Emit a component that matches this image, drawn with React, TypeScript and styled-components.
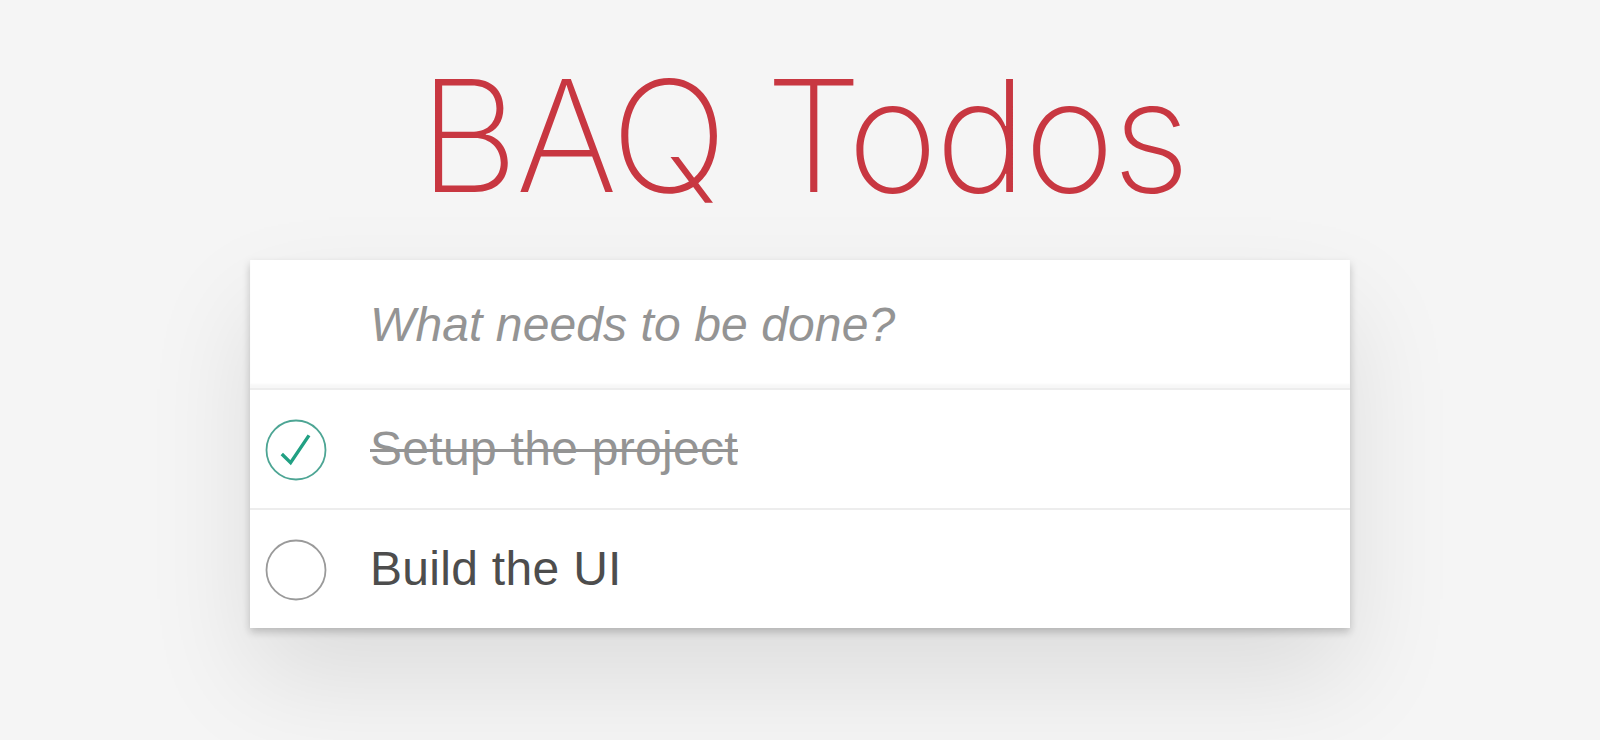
import React from "react";
import styled, { createGlobalStyle } from "styled-components";

const GlobalStyle = createGlobalStyle`
  html, body {
    margin: 0;
    padding: 0;
    background: #f5f5f5;
  }
  body {
    font-family: "Liberation Sans", Arial, sans-serif;
    -webkit-font-smoothing: antialiased;
  }
`;

const Page = styled.div`
  display: flex;
  flex-direction: column;
  align-items: center;
  min-height: 740px;
  padding-top: 58px;
  box-sizing: border-box;
`;

const Title = styled.h1`
  margin: 0;
  font-family: Inter, "Liberation Sans", sans-serif;
  font-weight: 200;
  font-size: 155px;
  line-height: 1;
  color: #c83741;
  letter-spacing: -2.9px;
  padding-left: 6px;
`;

const Card = styled.section`
  width: 1100px;
  margin-top: 47px;
  background: #ffffff;
  box-shadow: 0 4px 8px 0 rgba(0, 0, 0, 0.2), 0 50px 100px 0 rgba(0, 0, 0, 0.1);
`;

const InputRow = styled.div`
  height: 130px;
  display: flex;
  align-items: center;
  padding-left: 120px;
  box-shadow: inset 0 -4px 2px rgba(0, 0, 0, 0.03);
  border-bottom: 2px solid #ededed;
  box-sizing: border-box;
`;

const NewTodo = styled.input`
  flex: 1;
  border: none;
  outline: none;
  background: transparent;
  font-family: "Liberation Sans", Arial, sans-serif;
  font-size: 48px;
  letter-spacing: 0.1px;
  color: #4d4d4d;
  padding: 0 32px 0 0;
  &::placeholder {
    font-style: italic;
    color: #949494;
  }
`;

const List = styled.ul`
  list-style: none;
  margin: 0;
  padding: 0;
`;

const Item = styled.li<{ $last?: boolean }>`
  height: ${(p) => (p.$last ? "118px" : "120px")};
  display: flex;
  align-items: center;
  border-bottom: ${(p) => (p.$last ? "none" : "2px solid #ededed")};
  box-sizing: border-box;
`;

const ToggleCell = styled.div`
  width: 120px;
  padding-left: 15px;
  padding-top: 2px;
  box-sizing: border-box;
  display: flex;
  align-items: center;
  flex-shrink: 0;
  svg {
    display: block;
  }
`;

const Label = styled.span<{ $done?: boolean }>`
  font-size: 48px;
  line-height: 1.2;
  letter-spacing: 0.3px;
  color: ${(p) => (p.$done ? "#949494" : "#4d4d4d")};
  text-decoration: ${(p) => (p.$done ? "line-through" : "none")};
  text-decoration-thickness: 3px;
`;

function Toggle({ done }: { done: boolean }) {
  return (
    <svg width="62" height="62" viewBox="0 0 62 62">
      <circle
        cx="31"
        cy="31"
        r="29.5"
        fill="none"
        stroke={done ? "#4da594" : "#9a9a9a"}
        strokeWidth="1.8"
      />
      {done && (
        <path
          d="M16.8 35 L25.6 43.6 L44 16.4"
          fill="none"
          stroke="#21a083"
          strokeWidth="3.4"
        />
      )}
    </svg>
  );
}

const todos = [
  { id: 1, text: "Setup the project", done: true },
  { id: 2, text: "Build the UI", done: false },
];

export default function App() {
  return (
    <>
      <GlobalStyle />
      <Page>
        <Title>BAQ Todos</Title>
        <Card>
          <InputRow>
            <NewTodo placeholder="What needs to be done?" />
          </InputRow>
          <List>
            {todos.map((t, i) => (
              <Item key={t.id} $last={i === todos.length - 1}>
                <ToggleCell>
                  <Toggle done={t.done} />
                </ToggleCell>
                <Label $done={t.done}>{t.text}</Label>
              </Item>
            ))}
          </List>
        </Card>
      </Page>
    </>
  );
}
